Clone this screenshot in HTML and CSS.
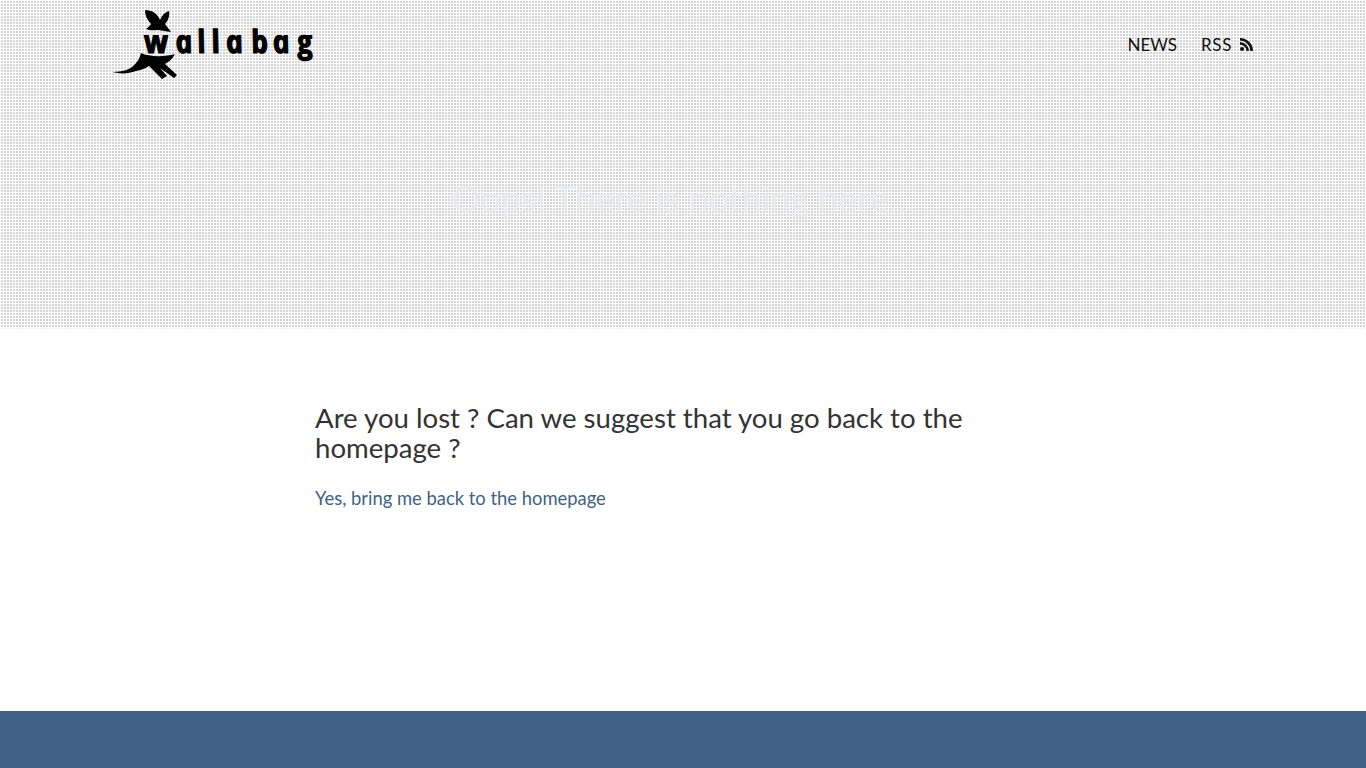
FILE: index.html
```html
<!DOCTYPE html>
<html lang="en">
<head>
<meta charset="utf-8">
<title>wallabag</title>
<link rel="stylesheet" href="styles.css">
</head>
<body>
<header class="hero">
  <nav class="topbar">
    <a class="logo" href="#">
      <svg class="logo-svg" viewBox="113 10 206 69" width="206" height="69" role="img" aria-label="wallabag">
        <path d="M145 10 C152 10 158 14 160 20 C162 15 165 12 169 11 C170 16 168 21 165 24 C167 27 169 29 171 32 C166 31 162 31 158 30 C154 30 150 31 146 29 C148 27 150 26 151 24 C147 20 145 15 145 10 Z"/>
        <path d="M141 53 C149 57 165 57 175 54 C172 59 169 62 165 64 L177 75 L174 78 L160 68 L167 76 L162 79 L149 66 C146 68 142 70 136 71 C128 74 120 74 112 72 C122 72 128 70 132 67 C137 63 140 58 141 53 Z"/>
        <g transform="translate(0 53) skewX(12) scale(0.9 1)">
          <text class="logo-text"><tspan x="197">a</tspan><tspan x="221">l</tspan><tspan x="237">l</tspan><tspan x="253">a</tspan><tspan x="281">b</tspan><tspan x="305">a</tspan><tspan x="332">g</tspan></text>
        </g>
        <g transform="translate(146 53) skewX(12) scale(0.95 1)">
          <text class="logo-text">w</text>
        </g>
      </svg>
    </a>
    <ul class="menu">
      <li><a href="#">NEWS</a></li>
      <li><a class="rss-link" href="#">RSS<svg class="rss" viewBox="0 0 14 14" width="13" height="13" aria-hidden="true">
          <circle cx="2.2" cy="11.8" r="2.2"/>
          <path d="M0 4.4 V7.2 A6.8 6.8 0 0 1 6.8 14 H9.6 A9.6 9.6 0 0 0 0 4.4 Z"/>
          <path d="M0 0 V2.8 A11.2 11.2 0 0 1 11.2 14 H14 A14 14 0 0 0 0 0 Z"/>
        </svg></a></li>
    </ul>
  </nav>
  <h1 class="hero-title">Oops! There is nothing here...</h1>
</header>
<main class="content">
  <h2 class="lead">Are you lost ? Can we suggest that you go back to the homepage ?</h2>
  <p class="back"><a href="#">Yes, bring me back to the homepage</a></p>
</main>
<footer class="foot"></footer>
</body>
</html>
```
FILE: styles.css
```css
* { box-sizing: border-box; }
html, body { margin: 0; padding: 0; }
body {
  height: 768px;
  overflow: hidden;
  display: flex;
  flex-direction: column;
  font-family: Lato, "Open Sans", sans-serif;
  background: #fff;
  color: #333;
}
a { text-decoration: none; color: inherit; }
.hero {
  height: 329px;
  flex: none;
  border-bottom: 1px solid rgba(255, 255, 255, 0.65);
  background-color: #d6d6d6;
  background-image:
    linear-gradient(90deg, transparent 2px, #fff 2px),
    linear-gradient(transparent 2px, #fff 2px);
  background-size: 3px 3px;
  background-position: 1px 1px;
  background-origin: border-box;
  display: flex;
  flex-direction: column;
  align-items: center;
}
.topbar {
  width: 1140px;
  height: 89px;
  flex: none;
  display: flex;
  align-items: center;
  justify-content: space-between;
}
.logo { display: block; height: 69px; }
.logo-svg { display: block; fill: #000; }
.logo-text {
  font-family: "Open Sans", sans-serif;
  font-size: 32px;
  font-style: italic;
  font-weight: 700;
  stroke: #000;
  stroke-width: 1.1px;
  stroke-linejoin: round;
}
.menu {
  list-style: none;
  margin: 0;
  padding: 0;
  display: flex;
  gap: 24px;
  font-size: 17px;
  color: #111;
}
.rss-link { letter-spacing: 0.6px; }
.rss { fill: #111; margin-left: 8px; vertical-align: 0; }
.hero-title {
  margin: 87px 0 0;
  font-size: 36px;
  font-weight: 400;
  line-height: 44px;
  color: rgba(232, 235, 238, 0.85);
}
.content {
  flex: 1;
  width: 736px;
  margin: 0 auto;
  padding-top: 74px;
}
.lead {
  margin: 0;
  font-size: 27.6px;
  font-weight: 400;
  line-height: 30px;
  color: #333;
}
.back {
  margin: 21px 0 0;
  font-size: 18.4px;
  line-height: 28px;
  color: #3f6287;
}
.foot {
  height: 57px;
  flex: none;
  background: #3f6286;
}
```
